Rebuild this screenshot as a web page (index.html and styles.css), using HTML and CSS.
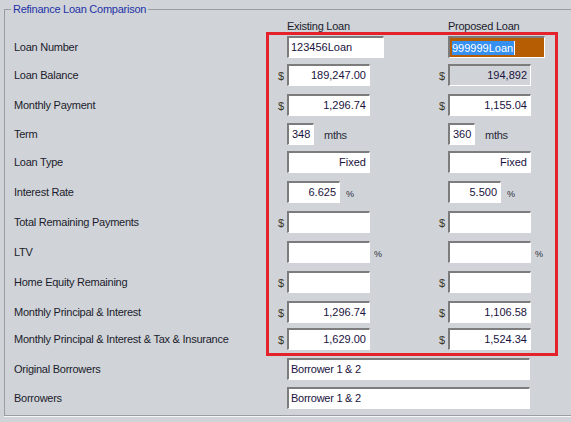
FILE: index.html
```html
<!DOCTYPE html>
<html>
<head>
<meta charset="utf-8">
<title>Refinance Loan Comparison</title>
<link rel="stylesheet" href="styles.css">
</head>
<body>
<fieldset class="group">
  <legend class="title">Refinance Loan Comparison</legend>
  <div class="grid">
    <span></span><span></span><span class="head">Existing Loan</span><span></span><span class="head">Proposed Loan</span>

    <span class="lbl">Loan Number</span><span></span>
    <div class="cell"><div class="inp left w97">123456Loan</div></div>
    <span></span>
    <div class="cell"><div class="inp left w97 active"><span class="sel">999999Loan</span><span class="caret"></span></div></div>

    <span class="lbl">Loan Balance</span><span class="cur">$</span>
    <div class="cell"><div class="inp w83">189,247.00</div></div>
    <span class="cur">$</span>
    <div class="cell"><div class="inp w83 dis">194,892</div></div>

    <span class="lbl">Monthly Payment</span><span class="cur">$</span>
    <div class="cell"><div class="inp w83">1,296.74</div></div>
    <span class="cur">$</span>
    <div class="cell"><div class="inp w83">1,155.04</div></div>

    <span class="lbl">Term</span><span></span>
    <div class="cell"><div class="inp w27">348</div><span class="unit mths">mths</span></div>
    <span></span>
    <div class="cell"><div class="inp w27">360</div><span class="unit mths">mths</span></div>

    <span class="lbl">Loan Type</span><span></span>
    <div class="cell"><div class="inp w83">Fixed</div></div>
    <span></span>
    <div class="cell"><div class="inp w83">Fixed</div></div>

    <span class="lbl">Interest Rate</span><span></span>
    <div class="cell"><div class="inp w53">6.625</div><span class="unit pct">%</span></div>
    <span></span>
    <div class="cell"><div class="inp w53">5.500</div><span class="unit pct">%</span></div>

    <span class="lbl">Total Remaining Payments</span><span class="cur">$</span>
    <div class="cell"><div class="inp w83"></div></div>
    <span class="cur">$</span>
    <div class="cell"><div class="inp w83"></div></div>

    <span class="lbl">LTV</span><span></span>
    <div class="cell"><div class="inp w83"></div><span class="unit ltv">%</span></div>
    <span></span>
    <div class="cell"><div class="inp w83"></div><span class="unit ltv">%</span></div>

    <span class="lbl">Home Equity Remaining</span><span class="cur">$</span>
    <div class="cell"><div class="inp w83"></div></div>
    <span class="cur">$</span>
    <div class="cell"><div class="inp w83"></div></div>

    <span class="lbl">Monthly Principal &amp; Interest</span><span class="cur">$</span>
    <div class="cell"><div class="inp w83">1,296.74</div></div>
    <span class="cur">$</span>
    <div class="cell"><div class="inp w83">1,106.58</div></div>

    <span class="lbl">Monthly Principal &amp; Interest &amp; Tax &amp; Insurance</span><span class="cur">$</span>
    <div class="cell"><div class="inp w83">1,629.00</div></div>
    <span class="cur">$</span>
    <div class="cell"><div class="inp w83">1,524.34</div></div>

    <span class="lbl">Original Borrowers</span><span></span>
    <div class="cell wide"><div class="inp left w243 txt">Borrower 1 &amp; 2</div></div>

    <span class="lbl">Borrowers</span><span></span>
    <div class="cell wide"><div class="inp left w243 txt">Borrower 1 &amp; 2</div></div>
  </div>
</fieldset>
<div class="annot"></div>
</body>
</html>
```

FILE: styles.css
```css
html, body {
  margin: 0;
  padding: 0;
}
body {
  width: 571px;
  height: 422px;
  overflow: hidden;
  position: relative;
  background: #d0d4d8;
  font-family: "Liberation Sans", Arial, sans-serif;
  font-size: 11px;
  color: #1b1b2c;
}
.group {
  box-sizing: border-box;
  margin: 3px 0 0 4px;
  padding: 0 0 6px 9px;
  border: 1px solid #9a9ea3;
  border-right: none;
  width: 567px;
  min-width: 0;
  box-shadow: 0 1px 0 #f4f6f8;
}
.title {
  padding: 0 2px;
  margin-left: -3px;
  line-height: 13px;
  color: #2232a6;
  letter-spacing: -0.25px;
}
.grid {
  display: grid;
  grid-template-columns: 264px 9px 152px 9px 1fr;
  grid-template-rows: 20px 28px 30px 29px 28px 30px 30px 30px 30px 30px 27px 30px 29px 22px;
}
.head {
  align-self: center;
  line-height: 13px;
  color: #1b1b2c;
  letter-spacing: -0.25px;
}
.lbl {
  line-height: 22px;
  height: 22px;
  white-space: nowrap;
  letter-spacing: -0.25px;
}
.cur {
  line-height: 22px;
  height: 22px;
  padding-top: 1px;
  color: #3a3628;
}
.cell {
  display: flex;
  align-items: center;
  height: 22px;
}
.cell.wide {
  grid-column: 3 / 6;
}
.inp {
  box-sizing: border-box;
  height: 22px;
  background: #ffffff;
  border-style: solid;
  border-width: 2px 1px 1px 2px;
  border-color: #7c7c7c #ffffff #ffffff #7c7c7c;
  padding: 0 3px 0 3px;
  line-height: 19px;
  color: #1a1240;
  text-align: right;
  white-space: nowrap;
  overflow: hidden;
}
.inp.left {
  text-align: left;
  padding-left: 2px;
}
.inp.txt {
  letter-spacing: -0.25px;
}
.inp.dis {
  background: #d0d4d8;
}
.inp.active {
  background: #b65c02;
  display: flex;
  align-items: center;
}
.sel {
  background: #3590f0;
  color: #ffffff;
  line-height: 14px;
  padding: 0 1px 0 0;
}
.caret {
  display: inline-block;
  width: 1px;
  height: 14px;
  background: #ffffff;
}
.w97 { width: 97px; }
.w83 { width: 83px; }
.w53 { width: 53px; }
.w27 { width: 27px; }
.w243 { width: 243px; }
.unit {
  color: #2a2a3a;
}
.mths { margin-left: 10px; padding-top: 2px; letter-spacing: -0.25px; }
.pct { margin-left: 6px; font-size: 9px; padding-top: 3px; }
.ltv { margin-left: 4px; font-size: 9px; padding-top: 3px; }
.annot {
  position: absolute;
  left: 266px;
  top: 32px;
  width: 292px;
  height: 324px;
  box-sizing: border-box;
  border: 3px solid #e3222b;
  pointer-events: none;
}
```
